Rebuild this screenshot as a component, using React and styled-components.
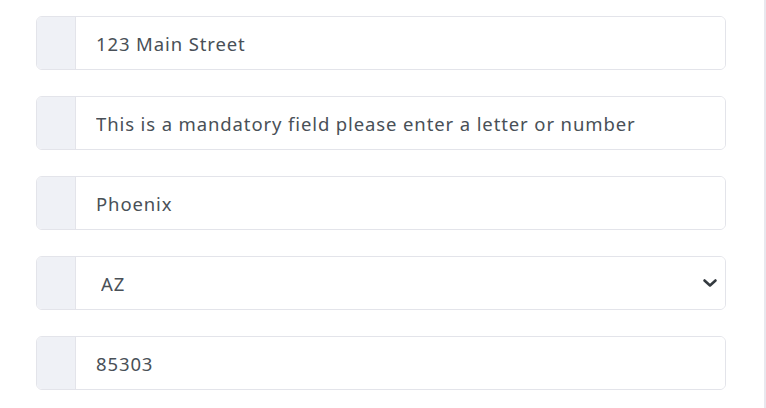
import React from "react";
import styled, { createGlobalStyle } from "styled-components";

const GlobalStyle = createGlobalStyle`
  html, body {
    margin: 0;
    padding: 0;
    background: #ffffff;
  }
  * {
    box-sizing: border-box;
  }
`;

const Page = styled.div`
  width: 766px;
  height: 408px;
  border-right: 2px solid #e8e8ee;
  padding: 16px 0 0 36px;
  display: flex;
  flex-direction: column;
  gap: 26px;
  font-family: "Noto Sans", "Open Sans", sans-serif;
`;

const Group = styled.div`
  position: relative;
  display: flex;
  width: 690px;
  height: 54px;
  border: 1px solid #e3e4ea;
  border-radius: 6px;
  overflow: hidden;
`;

const Addon = styled.div`
  width: 39px;
  flex: none;
  background: #eff1f6;
  border-right: 1px solid #e3e4ea;
`;

const Field = styled.input`
  flex: 1;
  border: none;
  outline: none;
  padding: 0 0 0 20px;
  font-family: inherit;
  font-size: 18.5px;
  letter-spacing: 0.88px;
  color: #495057;
  background: #fff;
`;

const Select = styled.select`
  flex: 1;
  border: none;
  outline: none;
  appearance: none;
  padding: 0 0 0 25px;
  font-family: inherit;
  font-size: 18.5px;
  letter-spacing: 0.88px;
  color: #495057;
  background: #fff;
`;

const Chevron = styled.svg`
  position: absolute;
  right: 7px;
  top: 50%;
  margin-top: -5px;
  pointer-events: none;
`;

const ChevronIcon = () => (
  <Chevron width="16" height="10" viewBox="0 0 16 10">
    <path
      d="M2.5 2.5l5.5 5 5.5-5"
      fill="none"
      stroke="#343a40"
      strokeWidth="2.6"
      strokeLinecap="round"
      strokeLinejoin="round"
    />
  </Chevron>
);

export default function App() {
  return (
    <>
      <GlobalStyle />
      <Page>
        <Group>
          <Addon />
          <Field defaultValue="123 Main Street" />
        </Group>
        <Group>
          <Addon />
          <Field defaultValue="This is a mandatory field please enter a letter or number" />
        </Group>
        <Group>
          <Addon />
          <Field defaultValue="Phoenix" />
        </Group>
        <Group>
          <Addon />
          <Select defaultValue="AZ">
            <option value="AZ">AZ</option>
            <option value="CA">CA</option>
            <option value="NV">NV</option>
          </Select>
          <ChevronIcon />
        </Group>
        <Group>
          <Addon />
          <Field defaultValue="85303" />
        </Group>
      </Page>
    </>
  );
}
